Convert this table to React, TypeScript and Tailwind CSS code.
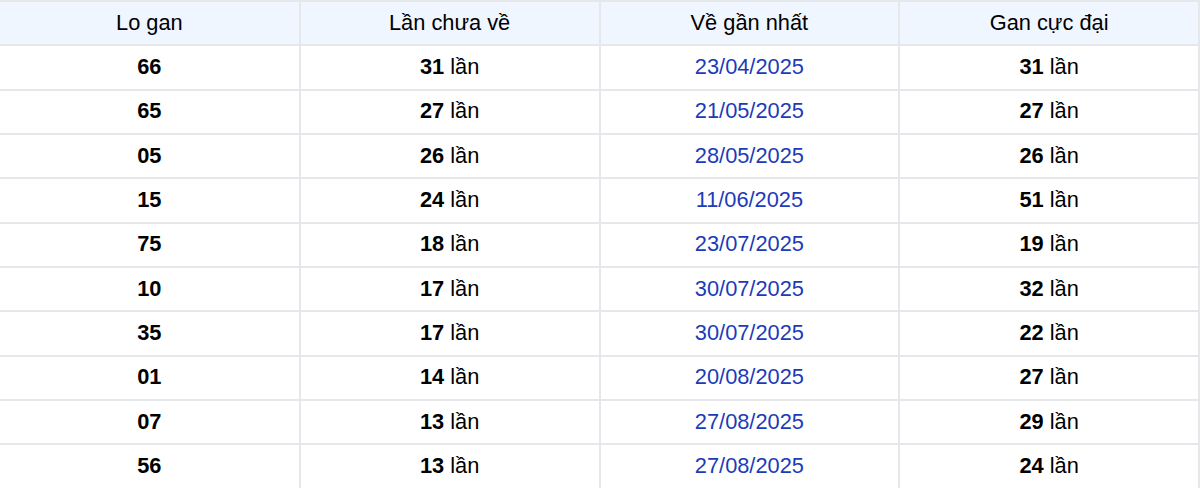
import React from 'react'

const rows = [
  { lo: '66', chua: 31, date: '23/04/2025', max: 31 },
  { lo: '65', chua: 27, date: '21/05/2025', max: 27 },
  { lo: '05', chua: 26, date: '28/05/2025', max: 26 },
  { lo: '15', chua: 24, date: '11/06/2025', max: 51 },
  { lo: '75', chua: 18, date: '23/07/2025', max: 19 },
  { lo: '10', chua: 17, date: '30/07/2025', max: 32 },
  { lo: '35', chua: 17, date: '30/07/2025', max: 22 },
  { lo: '01', chua: 14, date: '20/08/2025', max: 27 },
  { lo: '07', chua: 13, date: '27/08/2025', max: 29 },
  { lo: '56', chua: 13, date: '27/08/2025', max: 24 },
]

export default function App() {
  return (
    <div className="w-[1200px] bg-white font-['Liberation_Sans',Arial,sans-serif] text-[21.8px] text-black">
      <table className="w-full table-fixed border-collapse">
        <thead>
          <tr className="h-[44.33px] bg-[#eff6ff]">
            {['Lo gan', 'Lần chưa về', 'Về gần nhất', 'Gan cực đại'].map((h, i) => (
              <th
                key={h}
                className={`border-2 border-[#e5e7eb] font-normal text-center ${i === 0 ? 'border-l-0' : ''}`}
              >
                {h}
              </th>
            ))}
          </tr>
        </thead>
        <tbody>
          {rows.map((r, i) => (
            <tr key={i} className="h-[44.33px]">
              <td className="border-2 border-l-0 border-[#e5e7eb] text-center font-bold">{r.lo}</td>
              <td className="border-2 border-[#e5e7eb] text-center">
                <b>{r.chua}</b> lần
              </td>
              <td className="border-2 border-[#e5e7eb] text-center text-[#1c3bb8]">{r.date}</td>
              <td className="border-2 border-[#e5e7eb] text-center">
                <b>{r.max}</b> lần
              </td>
            </tr>
          ))}
        </tbody>
      </table>
    </div>
  )
}
